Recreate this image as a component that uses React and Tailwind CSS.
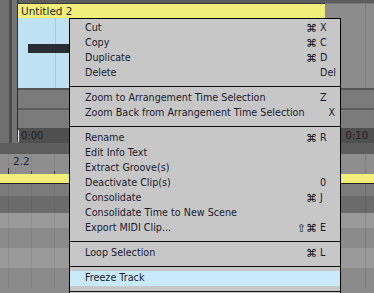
import React from 'react';

const items = [
  { label: 'Cut', mod: '⌘', key: 'X' },
  { label: 'Copy', mod: '⌘', key: 'C' },
  { label: 'Duplicate', mod: '⌘', key: 'D' },
  { label: 'Delete', key: 'Del' },
  { sep: true },
  { label: 'Zoom to Arrangement Time Selection', key: 'Z' },
  { label: 'Zoom Back from Arrangement Time Selection', key: 'X' },
  { sep: true },
  { label: 'Rename', mod: '⌘', key: 'R' },
  { label: 'Edit Info Text' },
  { label: 'Extract Groove(s)' },
  { label: 'Deactivate Clip(s)', key: '0' },
  { label: 'Consolidate', mod: '⌘', key: 'J' },
  { label: 'Consolidate Time to New Scene' },
  { label: 'Export MIDI Clip...', mod: '⇧⌘', key: 'E' },
  { sep: true },
  { label: 'Loop Selection', mod: '⌘', key: 'L' },
  { sep: true },
  { label: 'Freeze Track', active: true },
  { sep: true },
  { label: '' },
];

const font = { fontFamily: '"DejaVu Sans", Verdana, sans-serif' };

const GridCols = () => (
  <>
    <div className="absolute top-0 bottom-0 left-[8px] w-px bg-black/5" />
    <div className="absolute top-0 bottom-0 left-[31px] w-px bg-black/5" />
    <div className="absolute top-0 bottom-0 left-[54px] w-px bg-black/5" />
    <div className="absolute top-0 bottom-0 left-[365px] w-px bg-black/10" />
  </>
);

const App = () => {
  return (
    <div className="relative w-[374px] h-[293px] overflow-hidden bg-[#8a8a8a] text-[#1a1a2e]" style={font}>
      {/* upper track */}
      <div className="flex h-[143px]">
        <div className="w-[9px] bg-[#6f6f6f]" />
        <div className="w-[3px] bg-[#4c4c4c]" />
        <div className="w-[5px] bg-[#747474]" />
        <div className="flex-1 flex flex-col border-l border-[#2e2e2e] rounded-bl-[3px] overflow-hidden">
          <div className="h-[3px] bg-[#5e5e5e]" />
          <div className="flex h-[85px]">
            <div className="w-[307px] flex flex-col">
              <div className="h-[15px] bg-[#f2ee7c] border-t border-[#3a3a3a] text-[10.5px] leading-[14px] pl-[3px] text-[#2b2b2b]">Untitled 2</div>
              <div className="relative flex-1 bg-[#bfe2f2]">
                <div className="absolute left-[37px] top-0 bottom-0 w-px bg-[#a9cddd]" />
                <div className="absolute left-[10px] top-[26px] w-[42px] h-[9px] bg-[#2a2e33]" />
              </div>
            </div>
            <div className="relative flex-1 bg-[#8c8c8c] border-t border-[#777]">
              <div className="absolute top-0 bottom-0 left-[40px] w-px bg-[#7c7c7c]" />
            </div>
          </div>
          <div className="h-[2px] bg-[#555]" />
          <div className="h-[18px] bg-[#7b7b7b]" />
          <div className="h-[2px] bg-[#5c5c5c]" />
          <div className="h-[18px] bg-[#7b7b7b]" />
          <div className="flex-1 bg-[#4f4f4f] flex items-center justify-between text-[10px] text-[#1d1d1d]">
            <span className="pl-[2px] border-l border-white leading-[12px]">0:00</span>
            <span className="pr-[6px]">0:10</span>
          </div>
        </div>
      </div>
      <div className="h-[11px] bg-[#5d5d5d]" />
      {/* ruler */}
      <div className="relative h-[20px] bg-[#8e8e8e]">
        <GridCols />
        <div className="absolute left-[8px] bottom-0 w-px h-[6px] bg-[#333]" />
        <div className="absolute left-[31px] bottom-0 w-px h-[3px] bg-[#444]" />
        <div className="absolute left-[54px] bottom-0 w-px h-[3px] bg-[#444]" />
        <div className="absolute left-[13px] top-0 text-[10.5px] leading-[14px] text-[#1d1d3a]">2.2</div>
      </div>
      <div className="h-[10px] bg-[#f2ee78] border-b border-[#222]" />
      {/* lower lanes */}
      <div className="relative flex flex-col">
        <GridCols />
        <div className="h-[12px] bg-[#7b7b7b]" />
        <div className="h-[17px] bg-[#6b6b6b]" />
        <div className="h-[15px] bg-[#9a9a9a]" />
        <div className="h-[20px] bg-[#8b8b8b]" />
        <div className="h-[20px] bg-[#9a9a9a]" />
        <div className="h-[20px] bg-[#8b8b8b]" />
      </div>

      {/* context menu */}
      <div className="absolute left-[69px] top-[18px] w-[272px] bg-[#c7c7c7] border border-black pt-[2px] text-[9.6px]">
        {items.map((it, i) =>
          it.sep ? (
            <div key={i} className="h-[10px] flex items-center">
              <div className="w-full h-px bg-[#111]" />
            </div>
          ) : (
            <div key={i} className={`flex items-center h-[15px] ${it.active ? 'bg-[#c8eafa]' : ''}`}>
              <span className="flex-1 pl-[15px] whitespace-nowrap">{it.label}</span>
              <span className="w-[40px] text-right pr-[3px] text-[11px] leading-[15px] text-[#111]">{it.mod || ''}</span>
              <span className="w-[20px]">{it.key || ''}</span>
            </div>
          )
        )}
      </div>
    </div>
  );
};

export default App;
